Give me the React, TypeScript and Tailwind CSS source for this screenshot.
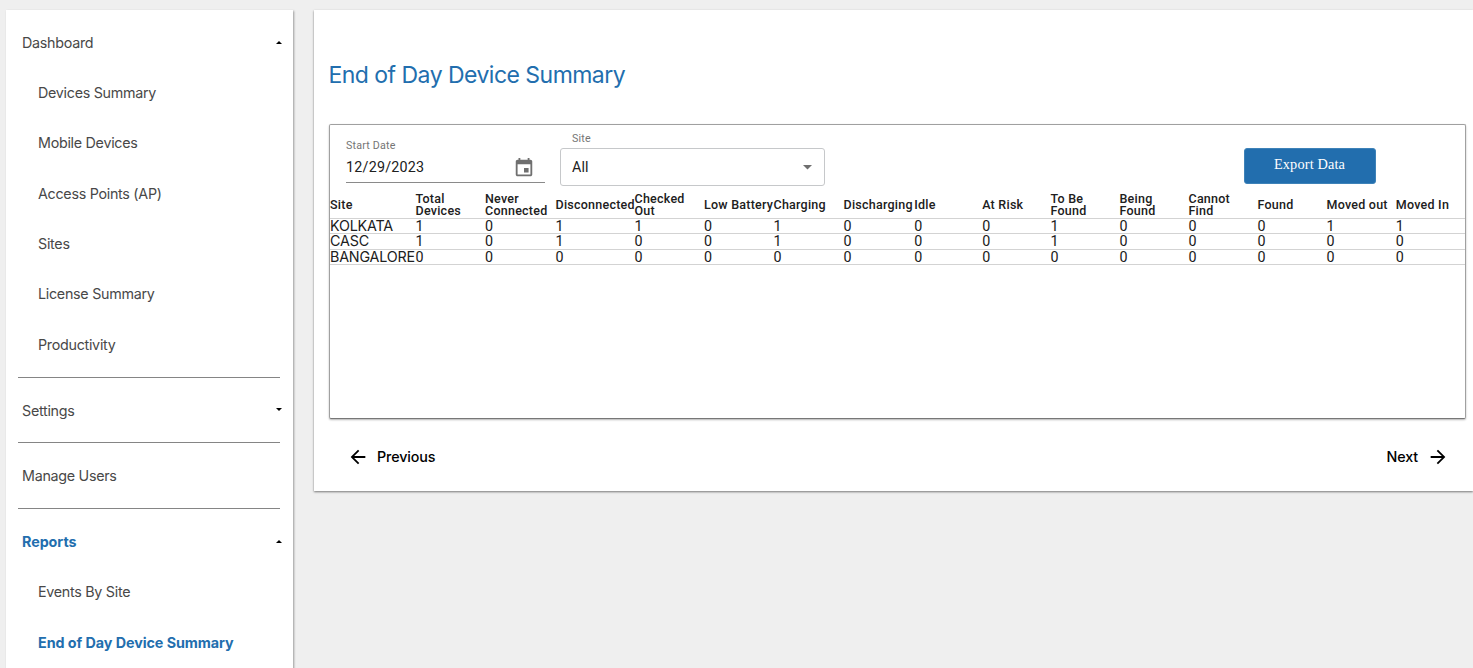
import React from "react";

const columns: string[] = [
  "Site", "Total Devices", "Never Connected", "Disconnected", "Checked Out", "Low Battery",
  "Charging", "Discharging", "Idle", "At Risk", "To Be Found", "Being Found", "Cannot Find",
  "Found", "Moved out", "Moved In",
];

const rows: { site: string; height: string; values: number[] }[] = [
  { site: "KOLKATA", height: "h-[15px]", values: [1, 0, 1, 1, 0, 1, 0, 0, 0, 1, 0, 0, 0, 1, 1] },
  { site: "CASC", height: "h-4 pb-px", values: [1, 0, 1, 0, 0, 1, 0, 0, 0, 1, 0, 0, 0, 0, 0] },
  { site: "BANGALORE", height: "h-[15px]", values: [0, 0, 0, 0, 0, 0, 0, 0, 0, 0, 0, 0, 0, 0, 0] },
];

const grid =
  "grid grid-cols-[85.5px_69.5px_70.5px_79px_69.5px_69.5px_70px_70.7px_68px_68.3px_69px_69px_69px_69px_69.3px_1fr] items-center";

function Caret({ up = false }: { up?: boolean }) {
  return (
    <svg width="6" height="3" viewBox="0 0 6 3" className="mb-px">
      <path d={up ? "M0 3L3 0L6 3Z" : "M0 0L3 3L6 0Z"} fill="#000" />
    </svg>
  );
}

function Group({ label, open, active, className = "" }: { label: string; open?: boolean; active?: boolean; className?: string }) {
  return (
    <div className={`flex h-[50.3px] shrink-0 items-center justify-between pr-[11px] pl-4 ${className}`}>
      <span className={active ? "font-bold tracking-[-0.04px] text-[#226eae]" : "tracking-[-0.28px]"}>{label}</span>
      {open !== undefined && <Caret up={open} />}
    </div>
  );
}

function Item({ label, active }: { label: string; active?: boolean }) {
  return (
    <div className="flex h-[50.3px] shrink-0 items-center pl-8">
      <span className={active ? "font-bold tracking-[-0.05px] text-[#226eae]" : "tracking-[-0.28px]"}>{label}</span>
    </div>
  );
}

function Divider() {
  return <div className="my-[7.1px] mr-[13px] ml-3 h-px shrink-0 bg-[#858585]" />;
}

function Sidebar() {
  return (
    <nav className="flex h-[680px] w-[287px] shrink-0 flex-col bg-white pt-[7.4px] text-[14.3px] whitespace-nowrap text-[#484848] shadow-[1px_1px_2px_rgba(0,0,0,0.35)]">
      <Group label="Dashboard" open />
      <Item label="Devices Summary" />
      <Item label="Mobile Devices" />
      <Item label="Access Points (AP)" />
      <Item label="Sites" />
      <Item label="License Summary" />
      <Item label="Productivity" />
      <Divider />
      <Group label="Settings" open={false} className="pt-px" />
      <Divider />
      <Group label="Manage Users" className="pt-px" />
      <Divider />
      <div className="pt-[0.9px]">
        <Group label="Reports" open active />
        <Item label="Events By Site" />
        <Item label="End of Day Device Summary" active />
      </div>
    </nav>
  );
}

function Filters() {
  return (
    <div className="flex h-[67px] items-start pl-4 font-['Roboto',sans-serif]">
      <div className="mt-[14px] w-[199px]">
        <div className="h-[14px] text-[10.7px] leading-[14px] tracking-[0.18px] text-[#757575]">Start Date</div>
        <div className="flex h-[30px] items-center justify-between border-b border-[#8a8a8a] pr-[10px]">
          <span className="text-[14.3px] tracking-[0.22px] text-[#202020]">12/29/2023</span>
          <svg width="22" height="22" viewBox="0 0 24 24" fill="#6f6f6f">
            <path d="M17 12h-5v5h5v-5zM16 1v2H8V1H6v2H5c-1.11 0-1.99.9-1.99 2L3 19c0 1.1.89 2 2 2h14c1.1 0 2-.9 2-2V5c0-1.1-.9-2-2-2h-1V1h-2zm3 18H5V8h14v11z" />
          </svg>
        </div>
      </div>
      <div className="mt-[7px] ml-[15px] w-[265px]">
        <div className="h-4 pl-3 text-[10.7px] leading-[14px] tracking-[0.2px] text-[#757575]">Site</div>
        <div className="flex h-[38px] items-center justify-between rounded-[3px] border border-[#c6c8ca] pr-3 pl-[11px]">
          <span className="pt-px text-[14.3px] tracking-[0.1px] text-[#202020]">All</span>
          <svg width="9" height="5" viewBox="0 0 9 5">
            <path d="M0 0h9L4.5 4.5Z" fill="#6f6f6f" />
          </svg>
        </div>
      </div>
      <button className="mt-[22.5px] mr-[89.5px] ml-auto h-[36px] w-[132px] rounded-[3px] border border-[#3e82b8] bg-[#226eae] pb-[1px] font-['Liberation_Serif',serif] text-[14.3px] tracking-[0.15px] text-white">
        Export Data
      </button>
    </div>
  );
}

function SummaryTable() {
  return (
    <div className="text-[#202020]">
      <div className={`${grid} h-[27px] border-b border-[#d3d3d3] font-['Roboto',sans-serif] text-[12.5px] leading-3 font-medium tracking-[0.24px]`}>
        {columns.map((c) => (
          <div key={c} className={c.startsWith("Low") ? "whitespace-nowrap" : ""}>{c}</div>
        ))}
      </div>
      {rows.map((r) => (
        <div key={r.site} className={`${grid} ${r.height} border-b border-[#d3d3d3] text-[14.3px] leading-[14px]`}>
          <div className="tracking-[-0.18px]">{r.site}</div>
          {r.values.map((v, i) => (
            <div key={i} className="font-['Roboto',sans-serif]">{v}</div>
          ))}
        </div>
      ))}
    </div>
  );
}

function Arrow({ right = false }: { right?: boolean }) {
  return (
    <svg width="22" height="22" viewBox="0 0 24 24" fill="#000">
      <path
        d={
          right
            ? "M12 4l-1.41 1.41L16.17 11H4v2h12.17l-5.58 5.59L12 20l8-8z"
            : "M20 11H7.83l5.59-5.59L12 4l-8 8 8 8 1.41-1.41L7.83 13H20v-2z"
        }
      />
    </svg>
  );
}

export default function App() {
  return (
    <div className="flex h-[668px] w-full overflow-hidden bg-[#efefef] pt-[10px] pl-[6px] font-['Inter',sans-serif]">
      <Sidebar />
      <main className="ml-[21px] flex h-[481px] min-w-0 flex-1 flex-col bg-white pr-[7px] pl-[15px] shadow-[0_1px_2px_rgba(0,0,0,0.5)]">
        <h1 className="mt-[50px] -ml-[0.5px] h-[64px] text-[23px] leading-[30px] tracking-[-0.53px] text-[#226eae]">
          End of Day Device Summary
        </h1>
        <section className="h-[295px] rounded-[2px] border border-[#a0a0a0] border-b-[#777] shadow-[0_1px_2px_rgba(0,0,0,0.3)]">
          <Filters />
          <SummaryTable />
        </section>
        <div className="mt-[27px] flex items-center justify-between pr-[17.5px] pl-[17.5px] text-[14.3px] font-medium tracking-[-0.14px] text-black">
          <div className="flex items-center gap-[8.5px]">
            <Arrow />
            <span>Previous</span>
          </div>
          <div className="flex items-center gap-[8.5px]">
            <span>Next</span>
            <Arrow right />
          </div>
        </div>
      </main>
    </div>
  );
}
